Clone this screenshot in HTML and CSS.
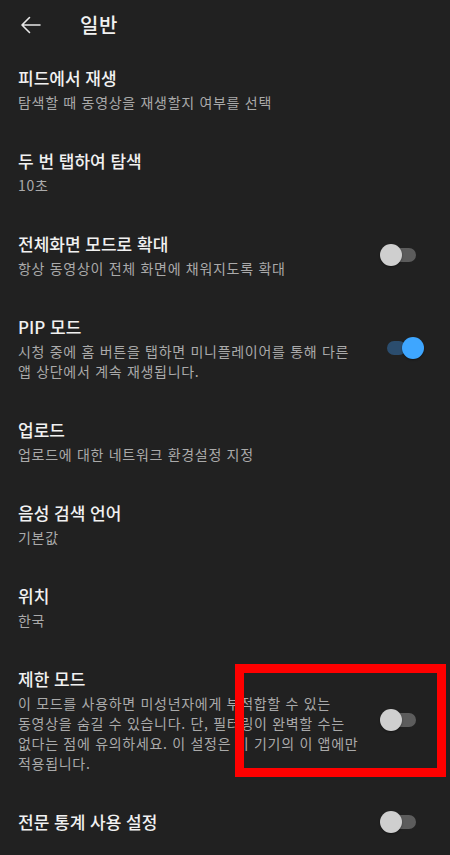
FILE: index.html
```html
<!DOCTYPE html>
<html lang="ko">
<head>
<meta charset="utf-8">
<title>일반</title>
<link rel="stylesheet" href="styles.css">
</head>
<body>
<div class="screen">
  <header class="topbar">
    <svg class="back" width="24" height="24" viewBox="0 0 24 24" aria-hidden="true">
      <path d="M21 12H3.5M10.5 4.5L3 12l7.5 7.5" fill="none" stroke="#e6e6e6" stroke-width="1.6" stroke-linecap="round" stroke-linejoin="round"/>
    </svg>
    <h1 class="page-title">일반</h1>
  </header>

  <div class="row">
    <div class="text">
      <div class="title">피드에서 재생</div>
      <div class="sub">탐색할 때 동영상을 재생할지 여부를 선택</div>
    </div>
  </div>

  <div class="row">
    <div class="text">
      <div class="title">두 번 탭하여 탐색</div>
      <div class="sub">10초</div>
    </div>
  </div>

  <div class="row">
    <div class="text">
      <div class="title">전체화면 모드로 확대</div>
      <div class="sub">항상 동영상이 전체 화면에 채워지도록 확대</div>
    </div>
    <div class="toggle"><span class="track"></span><span class="thumb"></span></div>
  </div>

  <div class="row">
    <div class="text">
      <div class="title">PIP 모드</div>
      <div class="sub">시청 중에 홈 버튼을 탭하면 미니플레이어를 통해 다른<br>앱 상단에서 계속 재생됩니다.</div>
    </div>
    <div class="toggle on"><span class="track"></span><span class="thumb"></span></div>
  </div>

  <div class="row">
    <div class="text">
      <div class="title">업로드</div>
      <div class="sub">업로드에 대한 네트워크 환경설정 지정</div>
    </div>
  </div>

  <div class="row">
    <div class="text">
      <div class="title">음성 검색 언어</div>
      <div class="sub">기본값</div>
    </div>
  </div>

  <div class="row">
    <div class="text">
      <div class="title">위치</div>
      <div class="sub">한국</div>
    </div>
  </div>

  <div class="row">
    <div class="text">
      <div class="title">제한 모드</div>
      <div class="sub">이 모드를 사용하면 미성년자에게 부적합할 수 있는<br>동영상을 숨길 수 있습니다. 단, 필터링이 완벽할 수는<br>없다는 점에 유의하세요. 이 설정은 이 기기의 이 앱에만<br>적용됩니다.</div>
    </div>
    <div class="toggle"><span class="track"></span><span class="thumb"></span></div>
  </div>

  <div class="row">
    <div class="text">
      <div class="title">전문 통계 사용 설정</div>
    </div>
    <div class="toggle"><span class="track"></span><span class="thumb"></span></div>
  </div>

  <div class="highlight"></div>
</div>
</body>
</html>
```

FILE: styles.css
```css
* { box-sizing: border-box; }
html, body {
  margin: 0;
  padding: 0;
  background: #212121;
}
body {
  font-family: "Noto Sans CJK KR", "Noto Sans", sans-serif;
  color: #f1f1f1;
}
.screen {
  position: relative;
  width: 450px;
  height: 855px;
  overflow: hidden;
  background: #212121;
}
.topbar {
  height: 47.5px;
  display: flex;
  align-items: center;
  padding: 0 0 0 19px;
}
.back {
  display: block;
  margin-top: 2px;
}
.page-title {
  margin: 2px 0 0 37px;
  font-size: 20px;
  font-weight: 500;
  line-height: 26px;
  letter-spacing: 0.5px;
  color: #f1f1f1;
}
.row {
  display: flex;
  align-items: center;
  padding: 18.5px 34px 18.5px 18px;
}
.text {
  flex: 1;
  min-width: 0;
}
.title {
  font-size: 17px;
  font-weight: 500;
  line-height: 24px;
  letter-spacing: 0;
  color: #f1f1f1;
}
.sub {
  margin-top: 2px;
  font-size: 14px;
  line-height: 20px;
  letter-spacing: 0.7px;
  color: #aaaaaa;
  white-space: nowrap;
}
.toggle {
  position: relative;
  flex: none;
  width: 36px;
  height: 22px;
  margin-left: 12px;
}
.track {
  position: absolute;
  left: 3px;
  right: 0;
  top: 4px;
  height: 14px;
  border-radius: 7px;
  background: #5c5c5c;
}
.thumb {
  position: absolute;
  left: 0;
  top: 0;
  width: 22px;
  height: 22px;
  border-radius: 50%;
  background: #cfcfcf;
  box-shadow: 0 1px 2px rgba(0,0,0,0.4);
}
.toggle.on .track {
  left: 7px;
  right: 10px;
  background: #2b4d6e;
}
.toggle.on .thumb {
  left: 22px;
  background: #3ea6ff;
}
.highlight {
  position: absolute;
  left: 235px;
  top: 664px;
  width: 211px;
  height: 113px;
  border: 9px solid #ff0000;
}
```
